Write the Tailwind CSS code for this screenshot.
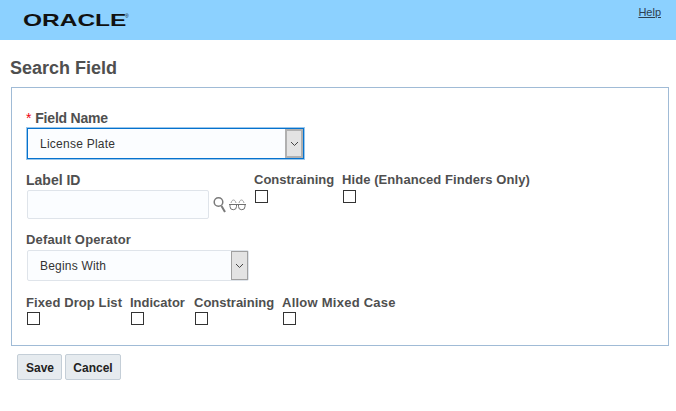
<!DOCTYPE html>
<html lang="en">
<head>
    <meta charset="UTF-8">
    <title>Search Field</title>
    <script src="https://cdn.jsdelivr.net/npm/@tailwindcss/browser@4"></script>
</head>
<body class="bg-white font-['Liberation_Sans',Arial,sans-serif] text-[#4f4f4f] w-[676px] h-[411px] overflow-hidden">
    <header class="h-10 bg-[#8cd1ff] flex justify-between">
        <div class="pl-[23px] pt-[11px] h-10 flex items-start">
            <span class="block w-[102px] h-5 overflow-visible">
                <span class="block origin-left scale-x-[1.44] text-[17px] leading-[20px] font-bold text-[#111111] w-[69px]">ORACLE</span>
            </span>
            <span class="text-[5px] leading-[5px] mt-[3px] text-[#111111]">®</span>
        </div>
        <a href="#" class="text-[11px] leading-[13px] pt-[6px] pr-[15px] text-[#2c3e50] underline">Help</a>
    </header>
    <main class="pl-[10px]">
        <h1 class="text-[18px] leading-[21px] font-bold mt-[18px]">Search Field</h1>
        <section class="mt-[8px] ml-px w-[658px] h-[259px] border border-[#a0bbd6] pl-[14px] pt-[22px]">
            <label class="block text-[14px] leading-[16px] font-bold tracking-[-0.2px]"><span class="text-[#f0000f] font-normal mr-[4px]">*</span>Field Name</label>
            <div class="mt-[2px] ml-px w-[277px] h-[31px] border border-[#0572ce] outline outline-[#0572ce]/40 bg-[#fbfdff] flex justify-between items-stretch">
                <span class="pl-[12px] text-[12px] leading-[30px] tracking-[0.25px] text-[#333333]">License Plate</span>
                <span class="w-[18px] bg-[#e3e3e3] border-2 border-[#b0b0b0] flex items-center justify-center">
                    <svg width="9" height="6" viewBox="0 0 9 6" fill="none" stroke="#444444"><path d="M1 1l3.500 3.500L8 1"/></svg>
                </span>
            </div>
            <div class="flex mt-[13px]">
                <div class="w-[228px]">
                    <label class="block text-[14px] leading-[16px] font-bold">Label ID</label>
                    <div class="flex mt-[2px] ml-px">
                        <div class="w-[182px] h-[29px] border border-[#dfe4ea] rounded-[2px] bg-[#fbfdff]"></div>
                        <svg class="ml-[4px] mt-[6px]" width="15" height="17" viewBox="0 0 15 17" fill="none" stroke="#7a7a7a" stroke-width="1.5"><circle cx="5.500" cy="6" r="4.300"/><path d="M8.500 10l3.500 6" stroke-width="2"/></svg>
                        <svg class="ml-px mt-[9px]" width="17" height="12" viewBox="0 0 17 12" fill="none" stroke="#707070"><path d="M0 5.500h17M1 5.500v2a3.250 3.250 0 0 0 6.500 0v-2M9.500 5.500v2a3.250 3.250 0 0 0 6.500 0v-2"/><path stroke="#a0a0a0" d="M2 4C2.500 2 3.500 1 4.500 1S6.500 2 7 4M10 4C10.500 2 11.500 1 12.500 1S14.500 2 15 4"/></svg>
                    </div>
                </div>
                <div class="w-[88px]">
                    <label class="block text-[13px] leading-[16px] font-bold">Constraining</label>
                    <div class="mt-[2px] ml-px w-[13px] h-[13px] border border-[#333333]"></div>
                </div>
                <div>
                    <label class="block text-[13px] leading-[16px] font-bold tracking-[0.08px]">Hide (Enhanced Finders Only)</label>
                    <div class="mt-[2px] ml-px w-[13px] h-[13px] border border-[#333333]"></div>
                </div>
            </div>
            <label class="block mt-[13px] text-[13px] leading-[16px] font-bold tracking-[0.15px]">Default Operator</label>
            <div class="mt-[2px] ml-px w-[222px] h-[31px] border border-[#dfe4ea] rounded-[2px] bg-[#fbfdff] flex justify-between items-stretch">
                <span class="pl-[12px] text-[12px] leading-[31px] tracking-[0.2px] text-[#333333]">Begins With</span>
                <span class="w-[17px] bg-[#e3e3e3] border border-[#a0a0a0] flex items-center justify-center">
                    <svg width="9" height="6" viewBox="0 0 9 6" fill="none" stroke="#444444"><path d="M1 1l3.500 3.500L8 1"/></svg>
                </span>
            </div>
            <div class="flex mt-[14px]">
                <div class="w-[104px]">
                    <label class="block text-[13px] leading-[16px] font-bold tracking-[0.1px]">Fixed Drop List</label>
                    <div class="mt-px ml-px w-[13px] h-[13px] border border-[#333333]"></div>
                </div>
                <div class="w-[64px]">
                    <label class="block text-[13px] leading-[16px] font-bold">Indicator</label>
                    <div class="mt-px ml-px w-[13px] h-[13px] border border-[#333333]"></div>
                </div>
                <div class="w-[88px]">
                    <label class="block text-[13px] leading-[16px] font-bold">Constraining</label>
                    <div class="mt-px ml-px w-[13px] h-[13px] border border-[#333333]"></div>
                </div>
                <div>
                    <label class="block text-[13px] leading-[16px] font-bold tracking-[0.25px]">Allow Mixed Case</label>
                    <div class="mt-px ml-px w-[13px] h-[13px] border border-[#333333]"></div>
                </div>
            </div>
        </section>
        <div class="flex gap-[3px] mt-[8px] ml-[7px]">
            <button class="w-[45px] h-[26px] pl-px pt-px border border-[#c4ced7] rounded-[2px] bg-[#e6ebef] text-[12px] font-bold text-[#222222]">Save</button>
            <button class="w-[56px] h-[26px] pt-px border border-[#c4ced7] rounded-[2px] bg-[#e6ebef] text-[12px] font-bold text-[#222222]">Cancel</button>
        </div>
    </main>
</body>
</html>
